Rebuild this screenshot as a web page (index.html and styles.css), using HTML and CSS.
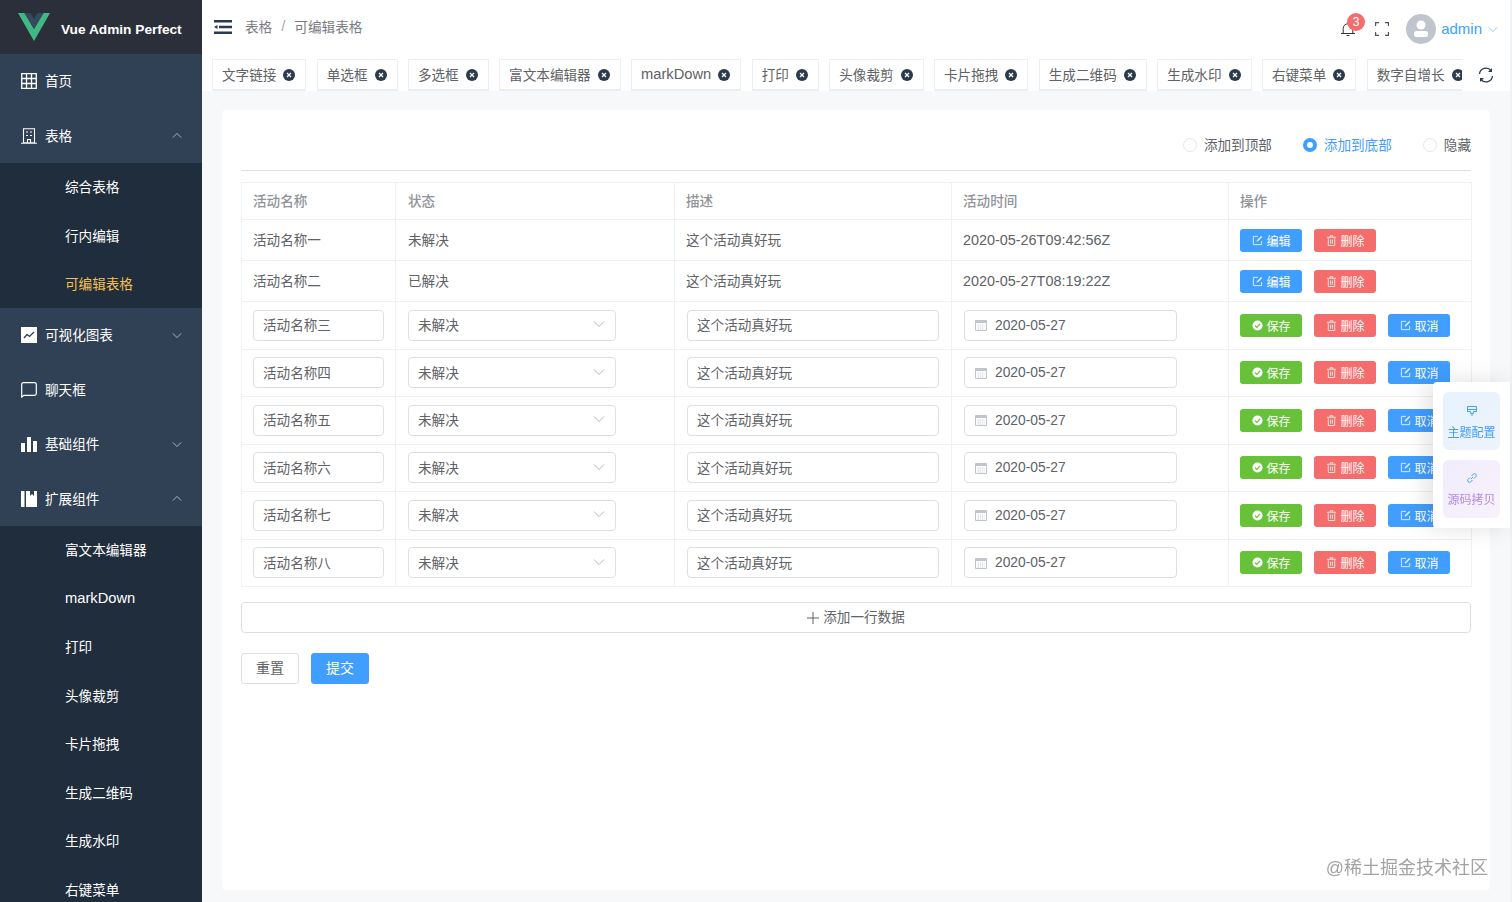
FILE: index.html
```html
<!DOCTYPE html>
<html lang="zh-CN">
<head>
  <meta charset="UTF-8" />
  <title>可编辑表格</title>
  <link rel="stylesheet" href="styles.css">
</head>
<body>

<!-- Shared icons -->
<svg class="sprite" xmlns="http://www.w3.org/2000/svg">
  <symbol id="i-down" viewBox="0 0 12 8"><path d="M1 1.5l5 5 5-5" fill="none" stroke="currentColor" stroke-width="1"/></symbol>
  <symbol id="i-up" viewBox="0 0 12 8"><path d="M1 6.5l5-5 5 5" fill="none" stroke="currentColor" stroke-width="1"/></symbol>
  <symbol id="i-close" viewBox="0 0 12 12"><circle cx="6" cy="6" r="6" fill="#2b3a4e"/><path d="M4 4l4 4M8 4l-4 4" stroke="#fff" stroke-width="1.3"/></symbol>
  <symbol id="i-edit" viewBox="0 0 12 12"><path d="M10.5 6.5v4h-9v-9h5" fill="none" stroke="currentColor"/><path d="M5 7.2l.3-1.6L10 1l1.2 1.2-4.6 4.7z" fill="currentColor"/></symbol>
  <symbol id="i-trash" viewBox="0 0 12 12"><path d="M2.5 3.5v8h7v-8M1 2.5h10M4.5 2.5V.8h3v1.7M5 5v4.5M7 5v4.5" fill="none" stroke="currentColor"/></symbol>
  <symbol id="i-check" viewBox="0 0 12 12"><circle cx="6" cy="6" r="5.5" fill="currentColor"/><path d="M3.3 6l2 2 3.4-3.6" fill="none" stroke="#67c23a" stroke-width="1.3"/></symbol>
  <symbol id="i-date" viewBox="0 0 12 12"><path d="M.5 1.500h11v10H.5z" fill="none" stroke="currentColor"/><path d="M.5 1.500h11v2.500H.5z" fill="currentColor"/><path d="M2.500 6h7M2.500 8h7M2.500 10h7" stroke="currentColor" stroke-dasharray="1.400 .8" stroke-width=".8"/></symbol>
</svg>

<div class="app">
  <aside class="sidebar">
    <div class="logo">
      <svg class="logo-mark" viewBox="0 0 32 28"><path d="M0 0h6.500L16 16 25.500 0H32L16 28z" fill="#41b883"/><path d="M6.500 0h6L16 6l3.500-6h6L16 16z" fill="#35495e"/></svg>
      <span>Vue Admin Perfect</span>
    </div>
    <nav class="menu">
      <a class="menu-item">
        <svg class="menu-icon" viewBox="0 0 16 16"><path d="M.7.7h14.600v14.600H.7zM.7 5.500h14.600M.7 10.500h14.600M5.500.7v14.600M10.500.7v14.600" fill="none" stroke="currentColor" stroke-width="1.300"/></svg>
        <span>首页</span>
      </a>
      <a class="menu-item">
        <svg class="menu-icon" viewBox="0 0 16 16"><path d="M2.500.7h11v14h-11zM0 15.300h16M5 4h2M9 4h2M5 7.500h2M9 7.500h2M6.500 14.500v-3h3v3" fill="none" stroke="currentColor" stroke-width="1.100"/></svg>
        <span>表格</span>
        <svg class="menu-arrow"><use href="#i-up"/></svg>
      </a>
      <div class="submenu">
        <a class="sub-item">综合表格</a>
        <a class="sub-item">行内编辑</a>
        <a class="sub-item active">可编辑表格</a>
      </div>
      <a class="menu-item">
        <svg class="menu-icon" viewBox="0 0 16 16"><path d="M0 0h16v16H0z" fill="currentColor"/><path d="M3 11l3-3.500 2.500 2L13 5" fill="none" stroke="#304156" stroke-width="1.300"/></svg>
        <span>可视化图表</span>
        <svg class="menu-arrow"><use href="#i-down"/></svg>
      </a>
      <a class="menu-item">
        <svg class="menu-icon" viewBox="0 0 16 16"><path d="M.7 15V2.500Q.7.7 2.500.7h11q1.800 0 1.800 1.800v9q0 1.800-1.800 1.800H3z" fill="none" stroke="currentColor" stroke-width="1.200"/></svg>
        <span>聊天框</span>
      </a>
      <a class="menu-item">
        <svg class="menu-icon" viewBox="0 0 16 16"><path d="M0 7h4v9H0zM6 1h4v15H6zM12 5h4v11h-4z" fill="currentColor"/></svg>
        <span>基础组件</span>
        <svg class="menu-arrow"><use href="#i-down"/></svg>
      </a>
      <a class="menu-item">
        <svg class="menu-icon" viewBox="0 0 16 16"><path d="M0 0h3.500v16H0zM5 0h11v16H5zM9 0v5l2-2 2 2V0z" fill="currentColor" fill-rule="evenodd"/></svg>
        <span>扩展组件</span>
        <svg class="menu-arrow"><use href="#i-up"/></svg>
      </a>
      <div class="submenu">
        <a class="sub-item">富文本编辑器</a>
        <a class="sub-item latin">markDown</a>
        <a class="sub-item">打印</a>
        <a class="sub-item">头像裁剪</a>
        <a class="sub-item">卡片拖拽</a>
        <a class="sub-item">生成二维码</a>
        <a class="sub-item">生成水印</a>
        <a class="sub-item">右键菜单</a>
      </div>
    </nav>
  </aside>

  <div class="main">
    <header class="topbar">
      <svg class="fold" viewBox="0 0 18 14"><path d="M0 0h18v2.500H0zM5 5.700h13v2.500H5zM0 11.500h18V14H0zM0 7l3.500-2v4z" fill="#2b3a4e"/></svg>
      <div class="crumbs">
        <span>表格</span>
        <span class="crumb-sep">/</span>
        <span>可编辑表格</span>
      </div>
      <div class="top-right">
        <div class="bell">
          <svg class="bell-icon" viewBox="0 0 14 14"><path d="M0 11.500h14M2.200 11.500V6.500a4.800 4.800 0 0 1 9.600 0v5M5.500 13.500h3" fill="none" stroke="#303133" stroke-width="1"/></svg>
          <span class="badge">3</span>
        </div>
        <svg class="screen" viewBox="0 0 14 14"><path d="M.6 4V.6H4M10 .6h3.400V4M13.400 10v3.400H10M4 13.400H.6V10" fill="none" stroke="#555" stroke-width="1.200"/></svg>
        <div class="avatar">
          <svg viewBox="0 0 30 30"><circle cx="15" cy="15" r="15" fill="#c0c4cc"/><circle cx="15" cy="11" r="4.500" fill="#fff"/><rect x="8" y="17" width="14" height="6" rx="2.500" fill="#fff"/></svg>
        </div>
        <span class="user-name">admin</span>
        <svg class="user-arrow"><use href="#i-down"/></svg>
      </div>
    </header>

    <div class="tagsbar">
      <div class="tags">
        <span class="tag">文字链接<svg class="tag-close"><use href="#i-close"/></svg></span>
        <span class="tag">单选框<svg class="tag-close"><use href="#i-close"/></svg></span>
        <span class="tag">多选框<svg class="tag-close"><use href="#i-close"/></svg></span>
        <span class="tag">富文本编辑器<svg class="tag-close"><use href="#i-close"/></svg></span>
        <span class="tag latin">markDown<svg class="tag-close"><use href="#i-close"/></svg></span>
        <span class="tag">打印<svg class="tag-close"><use href="#i-close"/></svg></span>
        <span class="tag">头像裁剪<svg class="tag-close"><use href="#i-close"/></svg></span>
        <span class="tag">卡片拖拽<svg class="tag-close"><use href="#i-close"/></svg></span>
        <span class="tag">生成二维码<svg class="tag-close"><use href="#i-close"/></svg></span>
        <span class="tag">生成水印<svg class="tag-close"><use href="#i-close"/></svg></span>
        <span class="tag">右键菜单<svg class="tag-close"><use href="#i-close"/></svg></span>
        <span class="tag">数字自增长<svg class="tag-close"><use href="#i-close"/></svg></span>
      </div>
      <svg class="refresh" viewBox="0 0 16 16"><path d="M1.500 7A6.500 6.500 0 0 1 13 3.500M14.500 9A6.500 6.500 0 0 1 3 12.500" fill="none" stroke="#2b3a4e" stroke-width="1.300"/><path d="M14 1v4h-4zM2 15v-4h4z" fill="#2b3a4e"/></svg>
    </div>

    <div class="content">
      <section class="card">
        <div class="radio-row">
          <label class="radio"><i class="radio-dot"></i>添加到顶部</label>
          <label class="radio checked"><i class="radio-dot"></i>添加到底部</label>
          <label class="radio"><i class="radio-dot"></i>隐藏</label>
        </div>

        <table class="grid">
          <colgroup>
            <col class="col-name"><col class="col-state"><col class="col-desc"><col class="col-time"><col class="col-ops">
          </colgroup>
          <thead>
            <tr><th>活动名称</th><th>状态</th><th>描述</th><th>活动时间</th><th>操作</th></tr>
          </thead>
          <tbody>
            <tr class="row-text">
              <td>活动名称一</td><td>未解决</td><td>这个活动真好玩</td><td class="stamp">2020-05-26T09:42:56Z</td>
              <td><div class="ops"><a class="btn blue"><svg><use href="#i-edit"/></svg>编辑</a><a class="btn red"><svg><use href="#i-trash"/></svg>删除</a></div></td>
            </tr>
            <tr class="row-text">
              <td>活动名称二</td><td>已解决</td><td>这个活动真好玩</td><td class="stamp">2020-05-27T08:19:22Z</td>
              <td><div class="ops"><a class="btn blue"><svg><use href="#i-edit"/></svg>编辑</a><a class="btn red"><svg><use href="#i-trash"/></svg>删除</a></div></td>
            </tr>
            <tr class="row-edit">
              <td><div class="field name">活动名称三</div></td>
              <td><div class="field select">未解决<svg><use href="#i-down"/></svg></div></td>
              <td><div class="field desc">这个活动真好玩</div></td>
              <td><div class="field date"><svg><use href="#i-date"/></svg>2020-05-27</div></td>
              <td><div class="ops"><a class="btn green"><svg><use href="#i-check"/></svg>保存</a><a class="btn red"><svg><use href="#i-trash"/></svg>删除</a><a class="btn blue"><svg><use href="#i-edit"/></svg>取消</a></div></td>
            </tr>
            <tr class="row-edit">
              <td><div class="field name">活动名称四</div></td>
              <td><div class="field select">未解决<svg><use href="#i-down"/></svg></div></td>
              <td><div class="field desc">这个活动真好玩</div></td>
              <td><div class="field date"><svg><use href="#i-date"/></svg>2020-05-27</div></td>
              <td><div class="ops"><a class="btn green"><svg><use href="#i-check"/></svg>保存</a><a class="btn red"><svg><use href="#i-trash"/></svg>删除</a><a class="btn blue"><svg><use href="#i-edit"/></svg>取消</a></div></td>
            </tr>
            <tr class="row-edit">
              <td><div class="field name">活动名称五</div></td>
              <td><div class="field select">未解决<svg><use href="#i-down"/></svg></div></td>
              <td><div class="field desc">这个活动真好玩</div></td>
              <td><div class="field date"><svg><use href="#i-date"/></svg>2020-05-27</div></td>
              <td><div class="ops"><a class="btn green"><svg><use href="#i-check"/></svg>保存</a><a class="btn red"><svg><use href="#i-trash"/></svg>删除</a><a class="btn blue"><svg><use href="#i-edit"/></svg>取消</a></div></td>
            </tr>
            <tr class="row-edit">
              <td><div class="field name">活动名称六</div></td>
              <td><div class="field select">未解决<svg><use href="#i-down"/></svg></div></td>
              <td><div class="field desc">这个活动真好玩</div></td>
              <td><div class="field date"><svg><use href="#i-date"/></svg>2020-05-27</div></td>
              <td><div class="ops"><a class="btn green"><svg><use href="#i-check"/></svg>保存</a><a class="btn red"><svg><use href="#i-trash"/></svg>删除</a><a class="btn blue"><svg><use href="#i-edit"/></svg>取消</a></div></td>
            </tr>
            <tr class="row-edit">
              <td><div class="field name">活动名称七</div></td>
              <td><div class="field select">未解决<svg><use href="#i-down"/></svg></div></td>
              <td><div class="field desc">这个活动真好玩</div></td>
              <td><div class="field date"><svg><use href="#i-date"/></svg>2020-05-27</div></td>
              <td><div class="ops"><a class="btn green"><svg><use href="#i-check"/></svg>保存</a><a class="btn red"><svg><use href="#i-trash"/></svg>删除</a><a class="btn blue"><svg><use href="#i-edit"/></svg>取消</a></div></td>
            </tr>
            <tr class="row-edit">
              <td><div class="field name">活动名称八</div></td>
              <td><div class="field select">未解决<svg><use href="#i-down"/></svg></div></td>
              <td><div class="field desc">这个活动真好玩</div></td>
              <td><div class="field date"><svg><use href="#i-date"/></svg>2020-05-27</div></td>
              <td><div class="ops"><a class="btn green"><svg><use href="#i-check"/></svg>保存</a><a class="btn red"><svg><use href="#i-trash"/></svg>删除</a><a class="btn blue"><svg><use href="#i-edit"/></svg>取消</a></div></td>
            </tr>
          </tbody>
        </table>

        <div class="add-row">
          <svg viewBox="0 0 12 12"><path d="M6 0v12M0 6h12" stroke="#606266"/></svg>
          <span>添加一行数据</span>
        </div>

        <div class="form-actions">
          <a class="action">重置</a>
          <a class="action primary">提交</a>
        </div>
      </section>
    </div>
  </div>
</div>

<!-- Floating helper panel -->
<div class="float-panel">
  <div class="float-item theme">
    <svg viewBox="0 0 12 12"><path d="M1.500 1.500h9v5h-3v2h-3v-2h-3zM1.500 4.500h9M5 10h2" fill="none" stroke="currentColor"/></svg>
    <span>主题配置</span>
  </div>
  <div class="float-item source">
    <svg viewBox="0 0 12 12"><path d="M5 7l2-2M4 5.500L2 7.500a1.800 1.800 0 0 0 2.500 2.500l2-2M8 6.500l2-2A1.800 1.800 0 0 0 7.500 2l-2 2" fill="none" stroke="#409eff"/></svg>
    <span>源码拷贝</span>
  </div>
</div>

<div class="watermark">@稀土掘金技术社区</div>

</body>
</html>
```

FILE: styles.css
```css
* {
  box-sizing: border-box;
}
body {
  margin: 0;
  height: 902px;
  overflow: hidden;
  font-family: "Liberation Sans", "Noto Sans CJK SC", sans-serif;
  font-size: 13.6px;
  color: #606266;
  background: #f6f8f9;
}
a {
  text-decoration: none;
}
.sprite {
  display: none;
}
.latin {
  font-size: 14.7px;
}

.app {
  display: flex;
  height: 902px;
}

/* Sidebar */
.sidebar {
  width: 202px;
  flex: none;
  overflow: hidden;
  background: #304156;
  color: #fff;
}
.logo {
  height: 54px;
  display: flex;
  align-items: center;
  padding-left: 18px;
  background: #2b2f3a;
  font-weight: bold;
  font-size: 13.700px;
}
.logo span {
  padding-top: 4px;
}
.logo-mark {
  width: 32px;
  height: 28px;
  margin-right: 11px;
}
.menu-item {
  height: 54.4px;
  display: flex;
  align-items: center;
  padding-left: 21px;
  color: #fff;
}
.menu-item span {
  padding-bottom: 2px;
}
.menu-icon {
  width: 16px;
  height: 16px;
  margin-right: 8px;
  flex: none;
}
.menu-arrow {
  width: 10px;
  height: 7px;
  margin-left: auto;
  margin-right: 20px;
  color: #c3cad3;
}
.submenu {
  background: #1f2d3d;
}
.sub-item {
  display: flex;
  align-items: center;
  height: 48.5px;
  padding-left: 65px;
  padding-bottom: 2px;
  color: #fff;
}
.sub-item.active {
  color: #f4c14f;
}

/* Top bar */
.main {
  flex: 1;
  min-width: 0;
  display: flex;
  flex-direction: column;
  border-right: 2px solid #f1f2f3;
}
.topbar {
  height: 54px;
  flex: none;
  display: flex;
  align-items: center;
  padding: 0 12px 0 12px;
  background: #fff;
}
.fold {
  width: 18px;
  height: 14px;
  margin-right: 13px;
}
.crumbs {
  display: flex;
  align-items: center;
  gap: 9px;
  padding-bottom: 2px;
  color: #787b82;
}
.crumb-sep {
  color: #a8abb2;
  font-size: 15px;
  line-height: 18px;
}
.top-right {
  margin-left: auto;
  padding-top: 4px;
  display: flex;
  align-items: center;
}
.bell {
  position: relative;
  width: 14px;
  height: 14px;
  margin-right: 20px;
}
.bell-icon {
  display: block;
  width: 14px;
  height: 14px;
}
.badge {
  position: absolute;
  left: 6px;
  top: -9px;
  width: 18px;
  height: 18px;
  border-radius: 50%;
  background: #f56c6c;
  color: #fff;
  font-size: 12px;
  line-height: 18px;
  text-align: center;
}
.screen {
  width: 14px;
  height: 14px;
  margin-right: 17px;
}
.avatar {
  width: 30px;
  height: 30px;
  margin-right: 5px;
}
.avatar svg {
  display: block;
}
.user-name {
  padding-bottom: 2px;
  color: #409eff;
  font-size: 15px;
}
.user-arrow {
  width: 10px;
  height: 7px;
  margin-left: 6px;
  color: #7dbcf8;
}

/* Tags */
.tagsbar {
  height: 37px;
  flex: none;
  display: flex;
  padding-left: 10px;
  background: #fff;
}
.tags {
  width: 1250px;
  overflow: hidden;
  display: flex;
  gap: 10.400px;
  padding-top: 5px;
}
.tag {
  flex: none;
  height: 32px;
  display: flex;
  align-items: center;
  padding: 0 10px 2px 9px;
  border: 1px solid #ebeef2;
  border-bottom-width: 2px;
  background: #fff;
  color: #606266;
  white-space: nowrap;
}
.tag-close {
  width: 12px;
  height: 12px;
  margin: 2px 0 0 7px;
}
.refresh {
  width: 16px;
  height: 16px;
  margin: 13px 0 0 16px;
}

/* Card */
.content {
  flex: 1;
  min-height: 0;
  padding: 19px 20px 12px 20px;
}
.card {
  height: 100%;
  padding: 0 19px;
  background: #fff;
  border-radius: 4px;
}
.radio-row {
  height: 61px;
  display: flex;
  justify-content: flex-end;
  align-items: center;
  gap: 31px;
  padding-top: 12px;
  border-bottom: 1px solid #dcdfe6;
}
.radio {
  display: flex;
  align-items: center;
  gap: 7px;
  line-height: 18px;
}
.radio-dot {
  width: 14px;
  height: 14px;
  margin-bottom: 2px;
  border-radius: 50%;
  border: 1px solid #e4e7ed;
  background: #fff;
}
.radio.checked {
  color: #409eff;
}
.radio.checked .radio-dot {
  border: 4px solid #409eff;
}

/* Table */
.grid {
  width: 1230px;
  margin-top: 11px;
  border-collapse: collapse;
  table-layout: fixed;
}
.col-name { width: 154px; }
.col-state { width: 279px; }
.col-desc { width: 277px; }
.col-time { width: 277px; }
.col-ops { width: 243px; }
.grid th, .grid td {
  border: 1px solid #eef1f5;
  padding: 0 12px 2px 11px;
  text-align: left;
}
.grid th:nth-child(2), .row-text td:nth-child(2), .row-edit td:nth-child(-n+4):not(:first-child) {
  padding-left: 12px;
}
.grid th {
  height: 37px;
  font-weight: 500;
  color: #909399;
}
.row-text td {
  height: 41px;
}
.row-edit td {
  height: 47.500px;
  padding-bottom: 0;
}
.grid .stamp {
  font-size: 14.400px;
  padding-bottom: 0;
}
.row-text td:last-child {
  padding-bottom: 0;
}
.field {
  height: 31px;
  display: flex;
  align-items: center;
  padding: 0 10px 2px 9px;
  border: 1px solid #dcdfe6;
  border-radius: 4px;
  background: #fff;
  color: #606266;
}
.field.name { width: 131px; }
.field.select { width: 208px; }
.field.desc { width: 252px; }
.field.date {
  width: 213px;
  padding: 0 0 0 10px;
  font-size: 13.800px;
}
.select svg {
  width: 12px;
  height: 8px;
  margin-left: auto;
  color: #b4b7bd;
}
.date svg {
  width: 12px;
  height: 12px;
  margin-right: 8px;
  color: #c0c4cc;
}
.ops {
  display: flex;
  gap: 12px;
}
.btn {
  width: 62px;
  height: 23px;
  display: flex;
  align-items: center;
  justify-content: center;
  gap: 3px;
  padding-left: 1px;
  border-radius: 3px;
  color: #fff;
  font-size: 12px;
}
.btn svg {
  width: 11px;
  height: 11px;
  opacity: .85;
}
.btn.blue { background: #409eff; }
.btn.red { background: #f56c6c; }
.btn.green { background: #67c23a; }
.btn.green svg { opacity: 1; }

.add-row {
  height: 31px;
  margin-top: 15px;
  display: flex;
  align-items: center;
  justify-content: center;
  gap: 4px;
  border: 1px solid #dcdfe6;
  border-radius: 4px;
}
.add-row svg {
  width: 12px;
  height: 12px;
}
.add-row span {
  padding-bottom: 4px;
}
.form-actions {
  display: flex;
  gap: 12px;
  margin-top: 20px;
}
.action {
  width: 58px;
  height: 31px;
  display: flex;
  align-items: center;
  justify-content: center;
  padding-bottom: 3px;
  border: 1px solid #dcdfe6;
  border-radius: 3px;
  color: #606266;
  font-size: 14px;
}
.action.primary {
  background: #409eff;
  border-color: #409eff;
  color: #fff;
}

/* Floating panel */
.float-panel {
  position: fixed;
  left: 1433px;
  top: 382px;
  width: 77px;
  height: 146px;
  padding: 10px;
  display: flex;
  flex-direction: column;
  gap: 10px;
  background: #fff;
  border-radius: 4px 0 0 4px;
  box-shadow: -6px 0 24px rgba(0,0,0,.12);
}
.float-item {
  height: 58px;
  display: flex;
  flex-direction: column;
  align-items: center;
  justify-content: center;
  gap: 6px;
  border-radius: 6px;
  font-size: 12px;
}
.float-item svg {
  width: 12px;
  height: 12px;
}
.theme {
  padding-top: 2px;
  background: linear-gradient(135deg, #e6f2ff, #eef3fb);
  color: #409eff;
}
.source {
  background: linear-gradient(135deg, #f0ecfb, #f8f2fc);
  color: #b58ae8;
}

.watermark {
  position: fixed;
  right: 24px;
  top: 853px;
  color: #a3a3a3;
  font-size: 18px;
}
```
